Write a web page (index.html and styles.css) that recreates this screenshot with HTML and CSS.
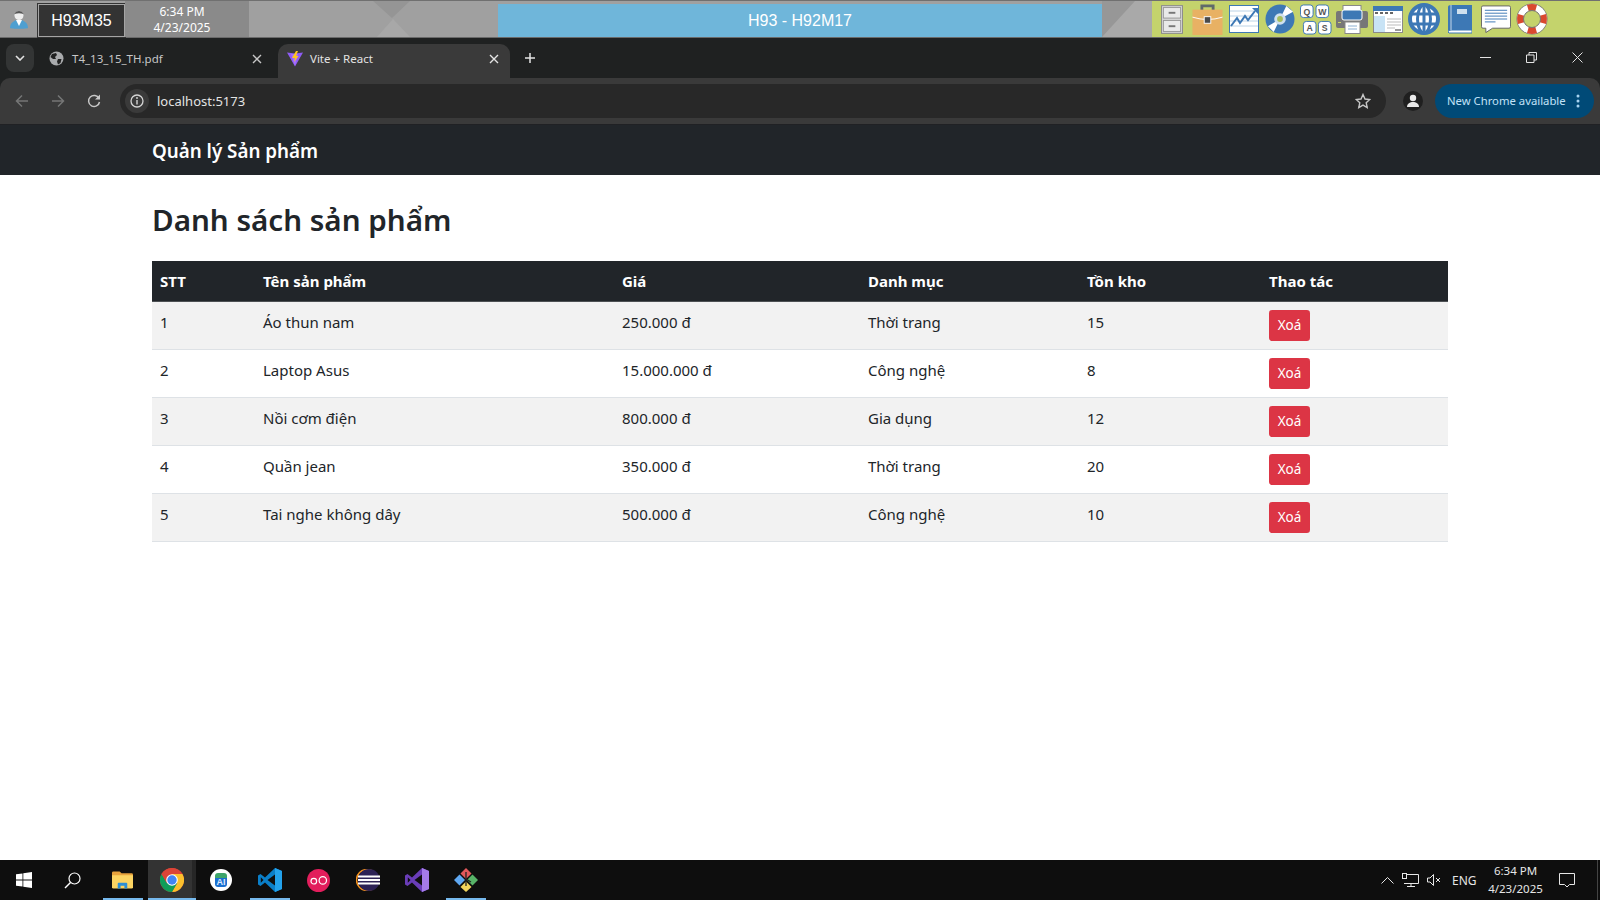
FILE: index.html
```html
<!DOCTYPE html>
<html lang="vi">
<head>
<meta charset="utf-8">
<title>Vite + React</title>
<link rel="stylesheet" href="styles.css">
</head>
<body>
<div class="screen">
  <header class="kiosk">
    <div class="kiosk-user">
      <svg width="20" height="20" viewBox="0 0 20 20"><path d="M1 19c0-5 4-7 6-8h6c2 1 6 3 6 8-1 1-17 1-18 0z" fill="#4f9fd0"/><path d="M7 11l3 6 3-6z" fill="#fff"/><circle cx="10" cy="6.500" r="4.500" fill="#eee"/><path d="M5.500 5c1-4 8-4 9 0-3-1-6-1-9 0z" fill="#555"/></svg>
    </div>
    <div class="kiosk-code"><span>H93M35</span></div>
    <div class="kiosk-time"><span>6:34 PM</span><span>4/23/2025</span></div>
    <div class="kiosk-fill">
      <svg viewBox="0 0 249 36" preserveAspectRatio="none"><path d="M124 0h37l-18 17z" fill="#959595"/><path d="M128 36h33l-17-18z" fill="#a8a8a8"/></svg>
    </div>
    <div class="kiosk-title">H93 - H92M17</div>
    <div class="kiosk-fill kiosk-fill-end">
      <svg viewBox="0 0 50 36" preserveAspectRatio="none"><path d="M0 36L33 0h17v36z" fill="#a9a9a9"/></svg>
    </div>
    <nav class="kiosk-tools">
      <svg width="22" height="29" viewBox="0 0 23 30"><rect x=".5" y=".5" width="22" height="29" fill="#d4d4d4" stroke="#8a8a8a"/><rect x="2.500" y="2.500" width="18" height="11" fill="#e9e9e9" stroke="#999"/><rect x="2.500" y="16" width="18" height="11.500" fill="#e9e9e9" stroke="#999"/><rect x="8" y="7" width="7" height="2" fill="#777"/><rect x="8" y="21" width="7" height="2" fill="#777"/></svg>
      <svg class="t2" width="31" height="31" viewBox="0 0 32 33"><path d="M10 7V2h12v5" fill="none" stroke="#5f6a6a" stroke-width="3"/><rect y="6" width="32" height="27" fill="#e8b164"/><path d="M0 14q16 5 32 0" fill="none" stroke="#fff"/><rect x="12.500" y="13.500" width="7" height="7" fill="#4a4a4a" stroke="#fff"/></svg>
      <svg class="t3" width="30" height="28" viewBox="0 0 30 28"><rect x=".5" y=".5" width="29" height="27" fill="#fff" stroke="#3d78b5"/><path d="M1 6h28M1 11h28M1 16h28M1 21h28" stroke="#bcd3e6"/><path d="M2 21l6-8 3 5 5-7 3 4 7-9" fill="none" stroke="#3d78b5" stroke-width="2"/><path d="M23 3h6v6z" fill="#3d78b5"/></svg>
      <svg class="t4" width="30" height="30" viewBox="0 0 31 31"><circle cx="15.500" cy="15.500" r="15" fill="#3d78b5"/><path d="M15.500 15.500L22 2l7 6zM15.500 15.500L3 23l6 6z" fill="#fff"/><circle cx="15.500" cy="15.500" r="6" fill="#cfe0ee"/><circle cx="15.500" cy="15.500" r="3" fill="#a7bf5e"/></svg>
      <svg class="t5" width="32" height="31" viewBox="0 0 33 32"><g fill="#fff" stroke="#3d78b5" stroke-width="1"><rect x=".5" y="1" width="13" height="13" rx="3"/><rect x="16.500" y="1" width="13" height="13" rx="3"/><rect x="3.500" y="18" width="13" height="13" rx="3"/><rect x="19" y="18" width="13" height="13" rx="3"/></g><g class="key" text-anchor="middle"><text x="7" y="11">Q</text><text x="23" y="11">W</text><text x="10" y="28">A</text><text x="25.500" y="28">S</text></g></svg>
      <svg class="t6" width="32" height="29" viewBox="0 0 32 29"><rect x="7" y=".5" width="18" height="8" fill="#fff" stroke="#888"/><rect y="6" width="32" height="17" rx="2" fill="#777"/><rect x="6" y="5" width="20" height="10" rx="2" fill="#3d78b5" stroke="#fff"/><rect x="9" y="17" width="15" height="11.500" fill="#fff" stroke="#888"/><path d="M12 21h9M12 24h9" stroke="#8db0d2"/><rect x="2" y="17" width="3" height="1" fill="#c9d36a"/></svg>
      <svg class="t7" width="30" height="27" viewBox="0 0 30 27"><rect x=".5" y=".5" width="29" height="26" fill="#fff" stroke="#8a8a8a"/><rect width="30" height="5" fill="#3d78b5"/><path d="M2 7h3M7 7h3M12 7h3M17 7h3" stroke="#666" stroke-width="2"/><rect x="1" y="10" width="11" height="16" fill="#c8e3f5"/><path d="M14 13h14M14 16h14M14 19h14M14 22h8" stroke="#bbb"/><rect x="22" y="23" width="6" height="2" fill="#999"/></svg>
      <svg class="t8" width="32" height="32" viewBox="0 0 32 32"><circle cx="16" cy="16" r="14" fill="#fff" stroke="#3d78b5" stroke-width="4"/><ellipse cx="16" cy="16" rx="6.500" ry="14" fill="none" stroke="#3d78b5" stroke-width="3"/><path d="M16 2v28M3 11h26M3 21h26" stroke="#3d78b5" stroke-width="3"/></svg>
      <svg class="t9" width="24" height="29" viewBox="0 0 24 29"><path d="M0 2Q0 0 3 0h21v26H3Q0 26 0 28z" fill="#3d78b5"/><path d="M0 27q0-2 3-2h21v3H1z" fill="#fff" stroke="#3d78b5"/><path d="M3 0v25" stroke="#fff" stroke-opacity=".7"/><rect x="9" y="4" width="10" height="5" fill="#cfe0ee"/></svg>
      <svg class="t10" width="30" height="28" viewBox="0 0 31 28"><path d="M2 .5h27q1.500 0 1.500 1.500v20q0 1.500-1.500 1.500H12L5 28v-4.500H2Q.5 23.500.5 22V2Q.5.500 2 .5z" fill="#fff" stroke="#666"/><path d="M4 5h23M4 8h23M4 11h23M4 14h23M4 17h11" stroke="#3d78b5"/></svg>
      <svg class="t11" width="32" height="32" viewBox="0 0 32 32"><circle cx="16" cy="16" r="15.500" fill="#777"/><circle cx="16" cy="16" r="14.800" fill="#fff"/><path d="M11 2a15 15 0 0 1 10 0l-2 7h-6zM30 11a15 15 0 0 1 0 10l-7-2v-6zM21 30a15 15 0 0 1-10 0l2-7h6zM2 21a15 15 0 0 1 0-10l7 2v6z" fill="#d9492f"/><circle cx="16" cy="16" r="8.500" fill="#c4d36c" stroke="#777"/></svg>
    </nav>
  </header>

  <div class="tabstrip">
    <button class="tab-menu" type="button" aria-label="Tab search"><svg width="10" height="6" viewBox="0 0 10 6"><path d="M1 1l4 4 4-4" fill="none" stroke="#e3e3e3" stroke-width="1.600"/></svg></button>
    <div class="tab">
      <svg width="15" height="15" viewBox="0 0 15 15"><circle cx="7.500" cy="7.500" r="7" fill="#a9abad"/><path d="M3 3l4-1 1 2-2 2 1 2H4L1.500 6zM9 8h3.500l-1 4-2.500 1.500-1-3z" fill="#202121"/></svg>
      <span class="tab-title">T4_13_15_TH.pdf</span>
      <svg class="tab-x" width="10" height="10" viewBox="0 0 10 10"><path d="M1 1l8 8M9 1l-8 8" stroke="#c7c7c7" stroke-width="1.400"/></svg>
    </div>
    <div class="tab tab-active">
      <svg width="16" height="16" viewBox="0 0 16 16"><path d="M0 1.500l8 1 8-1L8 15.500z" fill="#8f5cf6"/><path d="M4 3l4 12 3-12z" fill="#b57bff" opacity=".6"/><path d="M9 0L5 7h3L7 11l4.500-6H9l2-5z" fill="#ffc61c"/></svg>
      <span class="tab-title tab-title-active">Vite + React</span>
      <svg class="tab-x" width="10" height="10" viewBox="0 0 10 10"><path d="M1 1l8 8M9 1l-8 8" stroke="#e3e3e3" stroke-width="1.400"/></svg>
    </div>
    <svg class="tab-new" width="12" height="12" viewBox="0 0 12 12"><path d="M6 1v10M1 6h10" stroke="#e3e3e3" stroke-width="1.500"/></svg>
    <div class="win-controls">
      <svg width="11" height="11" viewBox="0 0 11 11"><path d="M0 5.500h11" stroke="#e3e3e3"/></svg>
      <svg width="11" height="11" viewBox="0 0 11 11"><path d="M.5 3h7.500v7.500H.5zM3 3V.5h7.500V8H8" fill="none" stroke="#e3e3e3"/></svg>
      <svg width="11" height="11" viewBox="0 0 11 11"><path d="M.5.500l10 10M10.500.500l-10 10" stroke="#e3e3e3"/></svg>
    </div>
  </div>

  <div class="toolbar">
    <svg class="tb-back" width="14" height="14" viewBox="0 0 14 14"><path d="M13 7H2M7 1.500L1.500 7 7 12.500" fill="none" stroke="#757676" stroke-width="1.500"/></svg>
    <svg class="tb-fwd" width="14" height="14" viewBox="0 0 14 14"><path d="M1 7h11M7 1.500L12.500 7 7 12.500" fill="none" stroke="#757676" stroke-width="1.500"/></svg>
    <svg class="tb-reload" width="14" height="14" viewBox="0 0 14 14"><path d="M12 4.500A5.500 5.500 0 1 0 12.500 8" fill="none" stroke="#c7c7c7" stroke-width="1.500"/><path d="M13 .5v5H8z" fill="#c7c7c7"/></svg>
    <div class="omnibox">
      <span class="omni-info"><svg width="14" height="14" viewBox="0 0 14 14"><circle cx="7" cy="7" r="6" fill="none" stroke="#d5d5d5" stroke-width="1.300"/><path d="M7 6v4.500" stroke="#d5d5d5" stroke-width="1.400"/><circle cx="7" cy="4" r=".9" fill="#d5d5d5"/></svg></span>
      <span class="omni-url">localhost:5173</span>
      <svg class="omni-star" width="16" height="16" viewBox="0 0 16 16"><path d="M8 1.500l2 4.500 4.800.5-3.600 3.200 1 4.800L8 12.100 3.800 14.500l1-4.800L1.200 6.500 6 6z" fill="none" stroke="#c7c7c7" stroke-width="1.400"/></svg>
    </div>
    <span class="profile"><svg width="14" height="14" viewBox="0 0 14 14"><circle cx="7" cy="4" r="3.200" fill="#e8e8e8"/><path d="M1 13c0-3.500 3-5 6-5s6 1.500 6 5z" fill="#e8e8e8"/></svg></span>
    <div class="update-pill">
      <span>New Chrome available</span>
      <svg width="4" height="14" viewBox="0 0 4 14"><circle cx="2" cy="2" r="1.500" fill="#a8d3f0"/><circle cx="2" cy="7" r="1.500" fill="#a8d3f0"/><circle cx="2" cy="12" r="1.500" fill="#a8d3f0"/></svg>
    </div>
  </div>

  <main class="page">
    <div class="navbar"><div class="container"><a class="brand">Quản lý Sản phẩm</a></div></div>
    <div class="container">
      <h2 class="heading">Danh sách sản phẩm</h2>
      <table class="products">
        <colgroup><col class="c1"><col class="c2"><col class="c3"><col class="c4"><col class="c5"><col class="c6"></colgroup>
        <thead><tr><th>STT</th><th>Tên sản phẩm</th><th>Giá</th><th>Danh mục</th><th>Tồn kho</th><th>Thao tác</th></tr></thead>
        <tbody>
          <tr><td>1</td><td>Áo thun nam</td><td>250.000 đ</td><td>Thời trang</td><td>15</td><td><button class="del" type="button">Xoá</button></td></tr>
          <tr><td>2</td><td>Laptop Asus</td><td>15.000.000 đ</td><td>Công nghệ</td><td>8</td><td><button class="del" type="button">Xoá</button></td></tr>
          <tr><td>3</td><td>Nồi cơm điện</td><td>800.000 đ</td><td>Gia dụng</td><td>12</td><td><button class="del" type="button">Xoá</button></td></tr>
          <tr><td>4</td><td>Quần jean</td><td>350.000 đ</td><td>Thời trang</td><td>20</td><td><button class="del" type="button">Xoá</button></td></tr>
          <tr><td>5</td><td>Tai nghe không dây</td><td>500.000 đ</td><td>Công nghệ</td><td>10</td><td><button class="del" type="button">Xoá</button></td></tr>
        </tbody>
      </table>
    </div>
  </main>

  <footer class="taskbar">
    <div class="task-slot task-start"><svg width="16" height="16" viewBox="0 0 16 16"><path d="M0 2.300l6.500-.9v6.200H0zM7.300 1.300L16 0v7.600H7.300zM0 8.400h6.500v6.200L0 13.700zM7.300 8.400H16V16l-8.700-1.300z" fill="#fff"/></svg></div>
    <div class="task-slot task-start"><svg width="17" height="17" viewBox="0 0 17 17"><circle cx="10.500" cy="6.500" r="5.500" fill="none" stroke="#fff" stroke-width="1.200"/><path d="M6.500 10.500L1 16" stroke="#fff" stroke-width="1.500"/></svg></div>
    <div class="task-gap"></div>
    <div class="task-slot open task-files"><svg class="files-icon" width="21" height="18" viewBox="0 0 22 18"><path d="M0 1.500Q0 0 1.500 0H8l2 2h10.500Q22 2 22 3.500V5H0z" fill="#e8a33d"/><path d="M0 4h22v12.500q0 1.500-1.500 1.500h-19Q0 18 0 16.500z" fill="#fcd462"/><path d="M6 18v-5q0-1 1-1h8q1 0 1 1v5h-3v-3H9v3z" fill="#2d8fd5"/></svg></div>
    <div class="task-slot active"><svg width="24" height="24" viewBox="0 0 24 24"><circle cx="12" cy="12" r="12" fill="#db4437"/><path d="M12 24A12 12 0 0 0 22.400 6H12l5.200 9z" fill="#fbc02d"/><path d="M1.600 6A12 12 0 0 0 12 24l5.200-9H6.800z" fill="#0f9d58"/><path d="M22.400 6H12a6 6 0 0 0-5.200 9L1.600 6A12 12 0 0 1 22.400 6z" fill="#db4437"/><circle cx="12" cy="12" r="5.800" fill="#fff"/><circle cx="12" cy="12" r="4.700" fill="#4285f4"/></svg></div>
    <div class="task-slot"><svg width="22" height="22" viewBox="0 0 22 22"><circle cx="11" cy="11" r="11" fill="#fff"/><path d="M5 9V7q0-3 3-3h6q3 0 3 3v2z" fill="#3ea56b"/><path d="M5 9h12v6q0 3-3 3H8q-3 0-3-3z" fill="#1a6fd0"/><text class="ai" x="11" y="16" text-anchor="middle">AI</text></svg></div>
    <div class="task-slot open"><svg width="24" height="24" viewBox="0 0 24 24"><path d="M17 0l7 3v18l-7 3-10-9.500L2.500 18 0 16.500V7.500L2.500 6 7 9.500z" fill="#0a7fc9"/><path d="M17 0l7 3v18l-7 3z" fill="#23a2ec"/><path d="M17 6.500L9.500 12l7.500 5.500z" fill="#0e0e0e"/><path d="M2.800 9.300L5.500 12l-2.700 2.700z" fill="#0e0e0e"/></svg></div>
    <div class="task-slot"><svg width="23" height="23" viewBox="0 0 23 23"><circle cx="11.500" cy="11.500" r="11.500" fill="#e21e5c"/><circle cx="6.800" cy="12.200" r="2.800" fill="none" stroke="#fff" stroke-width="1.200"/><circle cx="15.800" cy="11.400" r="3.700" fill="none" stroke="#fff" stroke-width="1.200"/></svg></div>
    <div class="task-slot"><svg width="24" height="22" viewBox="0 0 24 22"><circle cx="11" cy="11" r="10.500" fill="none" stroke="#f7941e" stroke-width="1.500"/><circle cx="13" cy="11" r="11" fill="#2c2255"/><path d="M2 7.500h22M2 11h22M2 14.500h22" stroke="#fff" stroke-width="1.800"/></svg></div>
    <div class="task-slot"><svg width="24" height="24" viewBox="0 0 24 24"><path d="M17 0l7 3v18l-7 3-10-9.500L2.500 18 0 16.500V7.500L2.500 6 7 9.500z" fill="#6a3db8"/><path d="M17 0l7 3v18l-7 3z" fill="#a47be8"/><path d="M17 6.500L9.500 12l7.500 5.500z" fill="#0e0e0e"/><path d="M2.800 9.300L5.500 12l-2.700 2.700z" fill="#0e0e0e"/></svg></div>
    <div class="task-slot open"><svg width="24" height="24" viewBox="0 0 24 24"><path d="M12 13.500l5.500 5.500L12 24l-5.500-5L12 13.500" fill="#f2d45c"/><path d="M12 0l5.500 5.500L12 11 6.500 5.500z" fill="#e2585b"/><path d="M5.500 6.500L11 12l-5.500 5.500L0 12z" fill="#5fa8f2"/><path d="M18.500 6.500L24 12l-5.500 5.500L13 12z" fill="#58b368"/><path d="M12 4v14M12 11l5 3" stroke="#222" stroke-width="1.300"/></svg></div>
    <div class="tray">
      <svg width="13" height="7" viewBox="0 0 13 7"><path d="M.5 6.500l6-6 6 6" fill="none" stroke="#e6e6e6"/></svg>
      <svg class="tray-net" width="17" height="14" viewBox="0 0 17 14"><path d="M2 1.500h14.500v9H2M9 10.500v3M5 13.500h8" fill="none" stroke="#e6e6e6"/><rect x=".5" y=".5" width="4" height="5" fill="#0e0e0e" stroke="#e6e6e6"/></svg>
      <svg class="tray-vol" width="14" height="12" viewBox="0 0 14 12"><path d="M.5 4h2.500L6.500.5v11L3 8H.5z" fill="none" stroke="#e6e6e6"/><path d="M9 4l4 4M13 4l-4 4" stroke="#e6e6e6"/></svg>
      <span class="tray-lang">ENG</span>
      <div class="tray-clock"><span>6:34 PM</span><span>4/23/2025</span></div>
      <svg class="tray-note" width="16" height="15" viewBox="0 0 16 15"><path d="M.5.500h15v11h-5L8 14l-2.500-2.500h-5z" fill="none" stroke="#e6e6e6"/></svg>
      <span class="show-desktop"></span>
    </div>
  </footer>
</div>
</body>
</html>
```

FILE: styles.css
```css
* { box-sizing: border-box; }
html, body { margin: 0; height: 100%; overflow: hidden; }
body { font-family: "Noto Sans", "Liberation Sans", sans-serif; background: #fff; color: #212529; }
svg { display: block; flex: none; }
.screen { width: 1600px; height: 900px; display: flex; flex-direction: column; background: #1f2121; }

/* kiosk bar */
.kiosk { height: 38px; flex: none; display: flex; background: #a0a0a0; border-top: 1px solid #707070; border-bottom: 1px solid #6a6a6a; font-family: "Liberation Sans", Arial, sans-serif; color: #fff; }
.kiosk-user { width: 38px; background: #9a9a9a; display: flex; align-items: center; justify-content: center; }
.kiosk-code { width: 87px; margin-top: 3px; background: #333; border: 1px solid #a5a5a5; outline: 1px solid #333; display: flex; align-items: center; justify-content: center; font-size: 16px; }
.kiosk-time { width: 124px; background: #8a8a8a; display: flex; flex-direction: column; align-items: center; justify-content: center; font-size: 12px; line-height: 16px; font-family: "Noto Sans", sans-serif; padding: 2px 10px 0 0; }
.kiosk-fill { width: 249px; }
.kiosk-fill svg { width: 100%; height: 100%; }
.kiosk-fill-end { width: 50px; background: #979797; }
.kiosk-title { width: 604px; margin-top: 3px; background: #6fb6da; display: flex; align-items: center; justify-content: center; font-size: 16px; padding-top: 1px; }
.kiosk-tools { flex: 1; background: #c4d36c; display: flex; align-items: center; padding-left: 9px; }
.t2 { margin-left: 9px; }
.t3 { margin-left: 6px; }
.t4 { margin-left: 6px; }
.t5 { margin-left: 5px; }
.t6 { margin-left: 4px; }
.t7 { margin-left: 5px; }
.t8 { margin-left: 5px; }
.t9 { margin-left: 8px; }
.t10 { margin-left: 9px; }
.t11 { margin-left: 5px; }
.key text { font: bold 9px "Liberation Sans", sans-serif; fill: #555; }

/* tabs */
.tabstrip { height: 40px; flex: none; background: #1f2121; display: flex; align-items: flex-start; padding: 6px 0 0 6px; font-size: 11.500px; color: #c7c7c7; }
.tab-menu { width: 28px; height: 28px; border: 0; padding: 0; border-radius: 8px; background: #333535; display: flex; align-items: center; justify-content: center; }
.tab { width: 240px; height: 34px; margin-left: 4px; padding: 0 16px 5px 11px; display: flex; align-items: center; }
.tab-active { margin-left: 0; background: #3a3a3a; border-radius: 10px 10px 0 0; color: #e3e3e3; padding: 0 11px 5px 9px; width: 232px; }
.tab-title { margin-left: 8px; flex: 1; line-height: 16px; }
.tab-title-active { margin-left: 7px; }
.tab-new { margin: 8px 0 0 14px; }
.win-controls { margin-left: auto; display: flex; gap: 35px; padding: 8px 17px 0 0; }

/* toolbar */
.toolbar { height: 47px; flex: none; background: #3a3a3a; border-bottom: 1px solid #202124; border-radius: 10px 10px 0 0; display: flex; align-items: center; padding-left: 15px; padding-bottom: 1px; }
.tb-fwd { margin-left: 22px; }
.tb-reload { margin-left: 22px; }
.omnibox { width: 1266px; height: 34px; margin-left: 19px; margin-right: 17px; border-radius: 17px; background: #282828; display: flex; align-items: center; padding: 0 15px 0 5px; }
.omni-info { width: 24px; height: 24px; border-radius: 50%; background: #3a3a3a; display: flex; align-items: center; justify-content: center; }
.omni-url { margin-left: 8px; flex: 1; font-size: 13px; color: #e3e3e3; }
.profile { width: 20px; height: 20px; border-radius: 50%; background: #1f1f1f; display: flex; align-items: center; justify-content: center; }
.update-pill { width: 159px; height: 34px; margin-left: 12px; border-radius: 17px; background: #004a77; color: #c2e2f7; display: flex; align-items: center; justify-content: space-between; padding: 0 14px 0 12px; font-size: 11.300px; }

/* page */
.page { flex: 1; min-height: 0; background: #fff; }
.navbar { height: 50px; background: #212529; display: flex; align-items: center; padding-top: 2px; }
.container { width: 1320px; margin: 0 auto; padding: 0 12px; }
.brand { font-size: 18.800px; font-weight: 600; line-height: 30px; color: #fff; }
.heading { margin: 26px 0 22px; font-size: 29.600px; line-height: 38px; font-weight: 600; color: #212529; }
.products { width: 1296px; border-collapse: collapse; table-layout: fixed; font-size: 15px; line-height: 24px; }
.c1 { width: 103px; } .c2 { width: 359px; } .c3 { width: 246px; } .c4 { width: 219px; } .c5 { width: 182px; } .c6 { width: 187px; }
.products th { padding: 8px; text-align: left; font-weight: 700; background: #212529; color: #fff; border-bottom: 1px solid #4d5154; }
.products td { padding: 8px; vertical-align: top; color: #212529; border-bottom: 1px solid #dee2e6; }
.products tbody tr:nth-child(odd) td { background: #f2f2f2; }
.del { display: block; width: 41px; height: 31px; padding: 0; border: 0; border-radius: 3.200px; background: #dc3545; color: #fff; font: 13.500px/21px "Noto Sans", sans-serif; }

/* taskbar */
.taskbar { height: 40px; flex: none; background: #0e0e0e; display: flex; color: #e6e6e6; }
.task-slot { width: 49px; display: flex; align-items: center; justify-content: center; position: relative; }
.task-start { width: 48px; }
.task-gap { width: 3px; }
.task-slot.open::after { content: ""; position: absolute; left: 5px; right: 4px; bottom: 0; height: 2px; background: #76b9ed; }
.task-slot.task-files::after { left: 4px; right: 5px; }
.files-icon { margin-right: 2px; }
.active { background: linear-gradient(to right, #333 44px, #262626 44px); width: 48px; }
.active::after { content: ""; position: absolute; left: 0; right: 0; bottom: 0; height: 2px; background: #76b9ed; }
.tray { margin-left: auto; display: flex; align-items: center; font-size: 12px; }
.tray-net { margin-left: 8px; }
.tray-vol { margin-left: 8px; }
.tray-lang { margin-left: 11px; width: 26px; }
.tray-clock { width: 68px; margin-left: 3px; display: flex; flex-direction: column; align-items: center; line-height: 18px; font-size: 11.500px; padding-left: 1px; }
.tray-note { margin-left: 10px; margin-right: 22px; }
.show-desktop { width: 3px; height: 40px; border-left: 1px solid #444; }
.ai { font: bold 9px "Liberation Sans", sans-serif; fill: #dfeaff; }
```
